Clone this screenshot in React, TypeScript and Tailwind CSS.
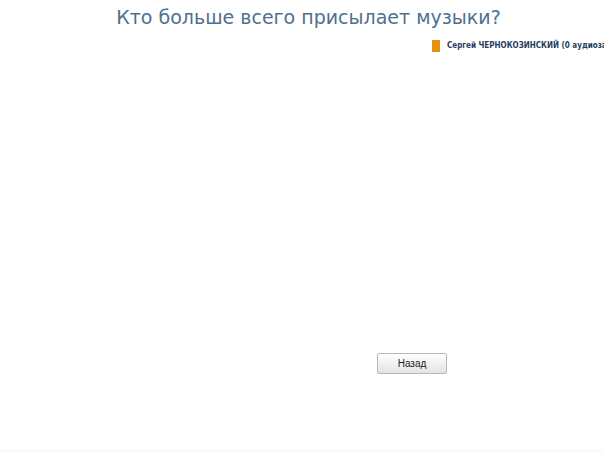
export default function App() {
  return (
    <div className="w-[604px] h-[453px] bg-white relative overflow-hidden font-['DejaVu_Sans',Verdana,sans-serif]">
      {/* Chart title */}
      <h1 className="text-center text-[19px] leading-[34px] text-[#4f6f8f] pl-[13px] whitespace-nowrap">
        Кто больше всего присылает музыки?
      </h1>

      {/* Legend */}
      <div className="flex items-center gap-[7px] pl-[432px] mt-[6px] whitespace-nowrap">
        <span className="w-[8px] h-[12px] bg-[#e8900f] shrink-0" />
        <span className="text-[8px] font-bold text-[#1f3d5e] font-['DejaVu_Sans_Condensed','DejaVu_Sans',sans-serif]">
          Сергей ЧЕРНОКОЗИНСКИЙ (0 аудиозаписей)
        </span>
      </div>

      {/* Back button */}
      <div className="flex pl-[377px] mt-[301px]">
        <button className="w-[70px] h-[21px] border border-[#b8b8b8] rounded-[2px] bg-gradient-to-b from-white to-[#e4e4e4] text-[10px] text-[#222] font-['Liberation_Sans',Arial,sans-serif]">
          Назад
        </button>
      </div>

      <div className="absolute bottom-0 left-0 right-0 h-[4px] bg-[#fdfafd]" />
    </div>
  );
}
